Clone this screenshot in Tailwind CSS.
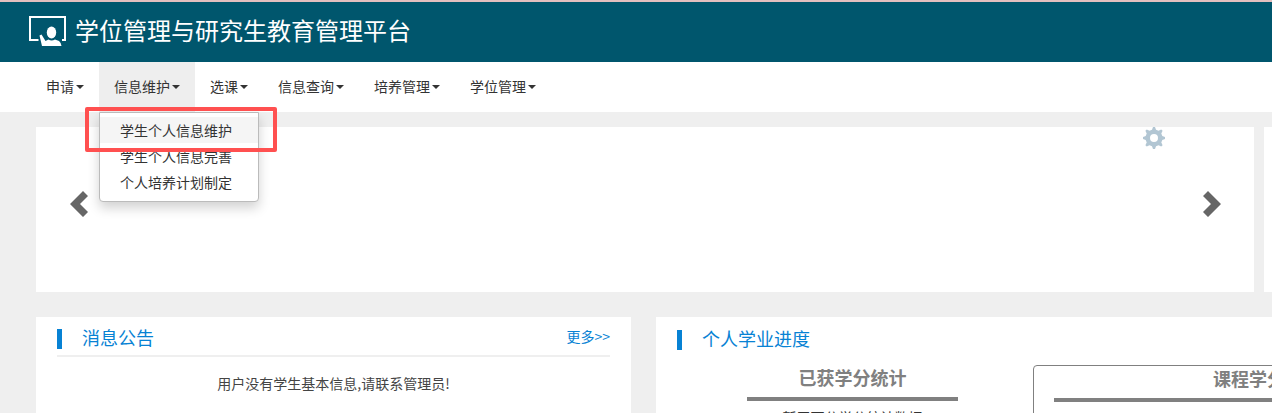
<!DOCTYPE html>
<html lang="zh-CN">
<head>
    <meta charset="UTF-8">
    <meta name="viewport" content="width=device-width, initial-scale=1.0">
    <title>学位管理与研究生教育管理平台</title>
    <script src="https://cdn.jsdelivr.net/npm/@tailwindcss/browser@4"></script>
</head>
<body class="h-screen overflow-hidden flex flex-col bg-[#efefef] text-[#333] text-sm font-['Noto_Sans_CJK_SC',sans-serif]">
    <header class="shrink-0 border-t-2 border-[#e3bfbf] bg-[#00566d] h-[62px] flex items-center gap-2 pl-7 text-white">
        <svg class="w-[38px] h-8 shrink-0" viewBox="0 0 38 32" fill="currentColor">
            <path d="M1 0H38V25H34V23H36V2H3V23H10.500V25H1Z"/>
            <ellipse cx="23.500" cy="16.500" rx="4.700" ry="6"/>
            <path d="M11.500 19.500L13.500 18.500L17.500 25L20.500 23.500Q23.500 25.500 27 23.500L31 25Q33 26.500 33.500 30H14Q13 26 11.500 19.500Z"/>
        </svg>
        <h1 class="text-2xl pb-1 pl-px">学位管理与研究生教育管理平台</h1>
    </header>

    <nav class="shrink-0 bg-white h-[50px] pl-[31px]">
        <ul class="flex h-full">
            <li><button class="h-full px-[15px] pb-0.5 flex items-center gap-0.5">申请<span class="mt-0.5 border-x-4 border-t-4 border-x-transparent border-t-[#333]"></span></button></li>
            <li class="relative">
                <button class="h-full px-[15px] pb-0.5 flex items-center gap-0.5 bg-[#eee]">信息维护<span class="mt-0.5 border-x-4 border-t-4 border-x-transparent border-t-[#333]"></span></button>
                <!-- Dropdown menu -->
                <ul class="absolute z-10 top-full left-0 w-40 pt-1 pb-1.5 bg-white border border-[#bbb] rounded-b shadow-[0_6px_12px_rgba(0,0,0,0.18)]">
                    <li><a href="#" class="block px-5 leading-[26px] bg-[#f5f5f5]">学生个人信息维护</a></li>
                    <li><a href="#" class="block px-5 leading-[26px]">学生个人信息完善</a></li>
                    <li><a href="#" class="block px-5 leading-[26px]">个人培养计划制定</a></li>
                </ul>
                <!-- Highlight box -->
                <div class="absolute z-20 top-[45px] -left-3.5 w-48 h-[45px] border-4 border-[#ff5050] rounded-xs pointer-events-none"></div>
            </li>
            <li><button class="h-full px-[15px] pb-0.5 flex items-center gap-0.5">选课<span class="mt-0.5 border-x-4 border-t-4 border-x-transparent border-t-[#333]"></span></button></li>
            <li><button class="h-full px-[15px] pb-0.5 flex items-center gap-0.5">信息查询<span class="mt-0.5 border-x-4 border-t-4 border-x-transparent border-t-[#333]"></span></button></li>
            <li><button class="h-full px-[15px] pb-0.5 flex items-center gap-0.5">培养管理<span class="mt-0.5 border-x-4 border-t-4 border-x-transparent border-t-[#333]"></span></button></li>
            <li><button class="h-full px-[15px] pb-0.5 flex items-center gap-0.5">学位管理<span class="mt-0.5 border-x-4 border-t-4 border-x-transparent border-t-[#333]"></span></button></li>
        </ul>
    </nav>

    <main class="flex-1 min-h-0 pt-[15px] pl-9 flex flex-col gap-[25px]">
        <!-- Carousel -->
        <div class="shrink-0 flex gap-2.5">
            <section class="relative flex-1 h-[165px] bg-white flex items-center justify-between pl-[33px] pr-8 pb-3">
                <button aria-label="上一页" class="text-[#666]">
                    <svg class="w-5 h-[26px]" viewBox="0 0 20 26" fill="currentColor"><path d="M14 0L19 5L11 13L19 21L14 26L1 13Z"/></svg>
                </button>
                <button aria-label="下一页" class="text-[#666]">
                    <svg class="w-5 h-[26px]" viewBox="0 0 20 26" fill="currentColor"><path d="M6 0L1 5L9 13L1 21L6 26L19 13Z"/></svg>
                </button>
                <button aria-label="设置" class="absolute top-0 right-[89px] text-[#b2c6d3]">
                    <svg class="w-[22px] h-[22px]" viewBox="0 0 22 22" fill="currentColor" fill-rule="evenodd">
                        <path d="M9 2.700L10 0H12L13 2.700L15.500 3.700L18.200 2.400L19.600 3.800L18.300 6.500L19.300 9L22 10V12L19.300 13L18.300 15.500L19.600 18.200L18.200 19.600L15.500 18.300L13 19.300L12 22H10L9 19.300L6.500 18.300L3.800 19.600L2.400 18.200L3.700 15.500L2.700 13L0 12V10L2.700 9L3.700 6.500L2.400 3.800L3.800 2.400L6.500 3.700ZM11 7A4 4 0 1 0 11 15A4 4 0 1 0 11 7Z"/>
                    </svg>
                </button>
            </section>
            <div class="w-2 bg-white"></div>
        </div>

        <div class="flex-1 min-h-0 flex gap-[25px]">
            <section class="flex-1 bg-white px-[21px]">
                <div class="h-10 pt-1.5 border-b-2 border-[#efefef] flex items-center text-[#0782d4]">
                    <span class="w-[5px] h-5 bg-[#0782d4]"></span>
                    <h2 class="ml-5 pb-1 text-lg">消息公告</h2>
                    <a href="#" class="ml-auto pb-1.5">更多&gt;&gt;</a>
                </div>
                <p class="pt-4 text-center text-[#444]">用户没有学生基本信息,请联系管理员!</p>
            </section>
            <section class="w-[616px] bg-white pl-[21px] overflow-hidden">
                <div class="h-10 pt-1.5 flex items-center text-[#0782d4]">
                    <span class="w-[5px] h-5 bg-[#0782d4]"></span>
                    <h2 class="ml-5 pb-1 text-lg">个人学业进度</h2>
                </div>
                <div class="flex gap-[54px] pl-[49px] pt-2">
                    <div class="shrink-0 w-[253px] px-[21px] text-center">
                        <h3 class="h-9 leading-6 border-b-4 border-[#808080] text-lg font-bold text-[#808080]">已获学分统计</h3>
                        <p class="pt-1.5">暂无可分学分统计数据</p>
                    </div>
                    <div class="shrink-0 w-[468px] px-5 border border-[#808080] rounded text-center">
                        <h3 class="h-9 leading-6 border-b-4 border-[#808080] text-lg font-bold text-[#808080]">课程学分统计</h3>
                    </div>
                </div>
            </section>
        </div>
    </main>
</body>
</html>
